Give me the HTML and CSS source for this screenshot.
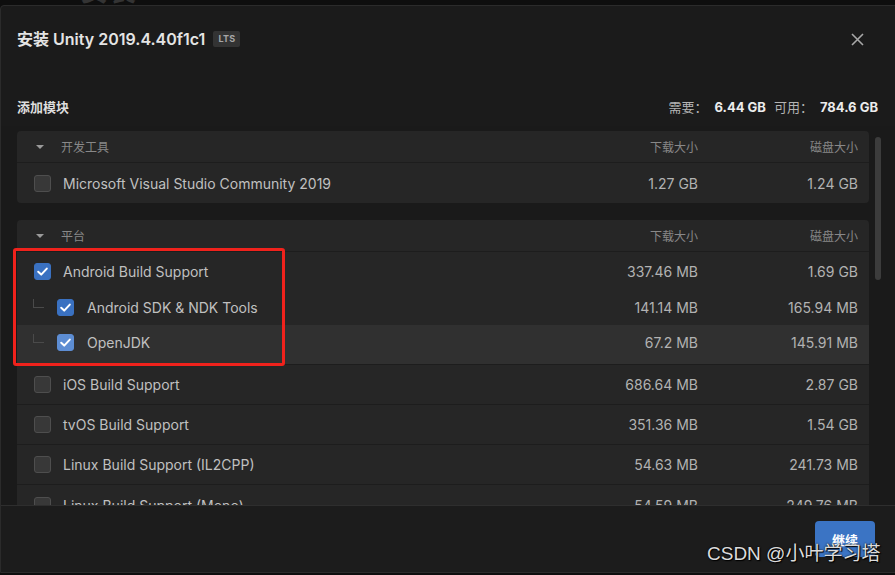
FILE: index.html
```html
<!DOCTYPE html>
<html lang="zh-CN">
<head>
<meta charset="utf-8">
<title>安装 Unity</title>
<link rel="stylesheet" href="styles.css">
</head>
<body>
<div class="backdrop"><div class="bg-title">安装</div></div>

<div class="dialog">
  <div class="dlg-head">
    <div class="title">安装 Unity 2019.4.40f1c1</div>
    <span class="badge">LTS</span>
    <button class="close" aria-label="关闭">
      <svg width="13" height="13" viewBox="0 0 13 13"><path d="M1 1 L12 12 M12 1 L1 12" stroke="#a8a8a8" stroke-width="1.6" fill="none"/></svg>
    </button>
  </div>

  <div class="sub">
    <div class="sub-title">添加模块</div>
    <div class="space"><span class="lbl">需要：</span><b>6.44 GB</b><span class="lbl">可用：</span><b>784.6 GB</b></div>
  </div>

  <div class="list">
    <div class="card">
      <div class="row head"><span class="tri"></span><span class="name">开发工具</span><span class="col">下载大小</span><span class="col">磁盘大小</span></div>
      <div class="row item"><span class="cb"></span><span class="name">Microsoft Visual Studio Community 2019</span><span class="col">1.27 GB</span><span class="col">1.24 GB</span></div>
    </div>

    <div class="card">
      <div class="row head"><span class="tri"></span><span class="name">平台</span><span class="col">下载大小</span><span class="col">磁盘大小</span></div>
      <div class="group">
        <div class="row parent"><span class="cb on"><svg viewBox="0 0 17 17"><path d="M4.2 8.8 L7.2 11.6 L12.8 5.6" stroke="#fff" stroke-width="2" fill="none" stroke-linecap="round" stroke-linejoin="round"/></svg></span><span class="name">Android Build Support</span><span class="col">337.46 MB</span><span class="col">1.69 GB</span></div>
        <div class="row child"><span class="tree"></span><span class="cb on"><svg viewBox="0 0 17 17"><path d="M4.2 8.8 L7.2 11.6 L12.8 5.6" stroke="#fff" stroke-width="2" fill="none" stroke-linecap="round" stroke-linejoin="round"/></svg></span><span class="name">Android SDK &amp; NDK Tools</span><span class="col">141.14 MB</span><span class="col">165.94 MB</span></div>
        <div class="row child last hover"><span class="tree"></span><span class="cb on hl"><svg viewBox="0 0 17 17"><path d="M4.2 8.8 L7.2 11.6 L12.8 5.6" stroke="#fff" stroke-width="2" fill="none" stroke-linecap="round" stroke-linejoin="round"/></svg></span><span class="name">OpenJDK</span><span class="col">67.2 MB</span><span class="col">145.91 MB</span></div>
      </div>
      <div class="row item"><span class="cb"></span><span class="name">iOS Build Support</span><span class="col">686.64 MB</span><span class="col">2.87 GB</span></div>
      <div class="row item"><span class="cb"></span><span class="name">tvOS Build Support</span><span class="col">351.36 MB</span><span class="col">1.54 GB</span></div>
      <div class="row item"><span class="cb"></span><span class="name">Linux Build Support (IL2CPP)</span><span class="col">54.63 MB</span><span class="col">241.73 MB</span></div>
      <div class="row item"><span class="cb"></span><span class="name">Linux Build Support (Mono)</span><span class="col">54.59 MB</span><span class="col">249.76 MB</span></div>
    </div>
    <div class="scrollbar"></div>
  </div>

  <div class="footer">
    <button class="primary">继续</button>
  </div>
</div>

<div class="annot"></div>
<div class="watermark">CSDN @小叶学习塔</div>
</body>
</html>
```

FILE: styles.css
```css
* { box-sizing: border-box; }

html, body {
  margin: 0;
  padding: 0;
  width: 895px;
  height: 575px;
  overflow: hidden;
  background: #0e0e0e;
  font-family: "Inter", "Noto Sans CJK SC", sans-serif;
}

body { position: relative; }

.backdrop {
  height: 575px;
  background: #0e0e0e;
}

.bg-title {
  padding-left: 80px;
  margin-top: -24px;
  font-size: 28px;
  font-weight: 700;
  color: #343434;
  line-height: 30px;
}

.dialog {
  position: absolute;
  left: 0;
  top: 5px;
  width: 897px;
  height: 568px;
  background: #1b1b1b;
  border: 1px solid #2b2b2b;
  border-radius: 4px 0 0 0;
  display: flex;
  flex-direction: column;
}

.dlg-head {
  height: 66px;
  flex: none;
  display: flex;
  align-items: center;
  padding: 0 0 0 16px;
}

.title {
  font-size: 16px;
  font-weight: 600;
  color: #e4e4e4;
  line-height: 20px;
}

.badge {
  margin-left: 8px;
  height: 16px;
  padding: 0 5px;
  background: #333333;
  border-radius: 2px;
  font-size: 9px;
  font-weight: 700;
  letter-spacing: 0.3px;
  color: #a6a6a6;
  line-height: 16px;
}

.close {
  margin-left: auto;
  margin-right: 32px;
  width: 13px;
  height: 13px;
  padding: 0;
  border: 0;
  background: none;
  display: flex;
}

.sub {
  height: 54px;
  flex: none;
  display: flex;
  align-items: flex-end;
  justify-content: space-between;
  padding: 0 18px 10px 16px;
}

.sub-title {
  font-size: 13px;
  font-weight: 600;
  color: #dedede;
  line-height: 18px;
}

.space {
  font-size: 13px;
  line-height: 18px;
  color: #b4b4b4;
  display: flex;
  align-items: center;
}

.space .lbl { margin-right: 7px; }
.space b {
  font-weight: 700;
  color: #ececec;
  margin-right: 8px;
}
.space b:last-child { margin-right: 0; }

.list {
  position: relative;
  height: 379px;
  flex: none;
  overflow: hidden;
  background: #1a1a1a;
  padding: 5px 27px 0 16px;
}

.card {
  background: #262626;
  border-radius: 4px;
  margin-bottom: 17px;
  overflow: hidden;
}

.row {
  display: flex;
  align-items: center;
  padding: 0 11px 0 17px;
}

.row .name {
  flex: 1;
  font-size: 14px;
  color: #c0c0c0;
}

.row .col {
  width: 160px;
  text-align: right;
  font-size: 14px;
  color: #b2b2b2;
}

.row.head {
  height: 32px;
  border-bottom: 1px solid #1d1d1d;
}

.row.head .name,
.row.head .col {
  font-size: 12px;
  color: #888888;
}

.tri {
  width: 0;
  height: 0;
  margin: 1px 17px 0 2px;
  border-left: 4.5px solid transparent;
  border-right: 4.5px solid transparent;
  border-top: 4.5px solid #9a9a9a;
}

.row.item {
  height: 40px;
  border-bottom: 1px solid #1d1d1d;
}
.card .row.item:last-child { border-bottom: 0; }

.group { border-bottom: 1px solid #1d1d1d; }

.row.parent { height: 38px; }

.row.child { height: 35px; padding-left: 16px; }
.row.child.last { height: 39px; padding-bottom: 5px; }
.row.hover { background: #303030; }

.tree {
  width: 11px;
  height: 9px;
  margin-top: -8px;
  margin-right: 13px;
  border-left: 1px solid #4a4a4a;
  border-bottom: 1px solid #4a4a4a;
}

.cb {
  width: 17px;
  height: 17px;
  flex: none;
  border-radius: 3px;
  background: #383838;
  border: 1px solid #4e4e4e;
  margin-right: 12px;
  display: flex;
}
.row.child .cb { margin-right: 13px; }

.cb svg { width: 17px; height: 17px; margin: -1px; }

.cb.on {
  background: #3a71c1;
  border-color: #3a71c1;
}
.cb.on.hl {
  background: #5d8dd3;
  border-color: #5d8dd3;
}

.scrollbar {
  position: absolute;
  right: 15px;
  top: 11px;
  width: 6px;
  height: 143px;
  border-radius: 3px;
  background: #3c3c3c;
}

.footer {
  flex: 1;
  border-top: 1px solid #2e2e2e;
  background: #1c1c1c;
  display: flex;
  justify-content: flex-end;
  align-items: flex-start;
  padding: 15px 21px 0 0;
}

.primary {
  width: 60px;
  height: 36px;
  border: 0;
  border-radius: 4px;
  background: #3b74c4;
  color: #ffffff;
  font-family: "Inter", "Noto Sans CJK SC", sans-serif;
  font-size: 13px;
  font-weight: 700;
  padding: 0;
}

.annot {
  position: absolute;
  left: 13px;
  top: 248px;
  width: 272px;
  height: 118px;
  border: 3px solid #f0221c;
  border-radius: 3px;
}

.watermark {
  position: absolute;
  left: 707px;
  top: 543px;
  font-family: "Liberation Sans", "Noto Sans CJK SC", sans-serif;
  font-size: 19px;
  line-height: 22px;
  color: #dcdcdc;
  text-shadow: 0 0 2px #000, 1px 1px 1px #000;
  white-space: nowrap;
}
```
